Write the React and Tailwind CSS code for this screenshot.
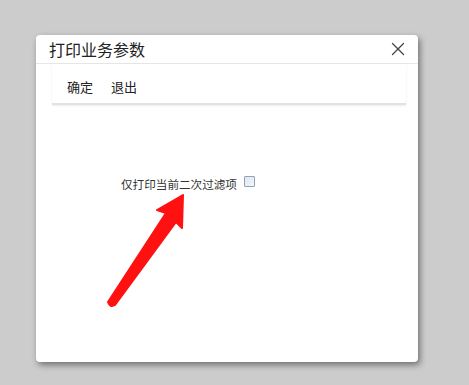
import { X } from 'lucide-react'

export default function App() {
    return (
        <div
            className="relative h-[385px] w-[469px] overflow-hidden bg-[#cccccc] pl-[36px] pt-[35px]"
            style={{ fontFamily: '"Liberation Sans", "Noto Sans CJK SC", sans-serif' }}
        >
            {/* dialog */}
            <div className="flex h-[327px] w-[382px] flex-col rounded-[4px] bg-white shadow-[2px_3px_6px_rgba(0,0,0,0.45)]">
                <div className="flex h-[29px] items-center justify-between border-b border-[#e6e6e6] pl-[13px] pr-[9px] pt-[4px]">
                    <span className="text-[16px] leading-none text-[#222]">打印业务参数</span>
                    <X className="mt-[-4px] h-[22px] w-[22px] text-[#444]" strokeWidth={1.4} />
                </div>

                {/* toolbar */}
                <div className="ml-[16px] mr-[12px] flex h-[41px] items-end gap-[18px] border-b-2 border-[#e2e2e2] pb-[6px] pl-[15px] shadow-[0_1px_2px_rgba(0,0,0,0.08)]">
                    <span className="text-[13px] leading-[18px] text-[#222]">确定</span>
                    <span className="text-[13px] leading-[18px] text-[#222]">退出</span>
                </div>

                {/* body */}
                <div className="flex items-start pl-[85px] pt-[72px]">
                    <span className="text-[11.6px] leading-[16px] text-[#333]">仅打印当前二次过滤项</span>
                    <span className="ml-[7px] mt-[-1px] block h-[11px] w-[11px] rounded-[1px] border border-[#8fa3bd] bg-gradient-to-br from-[#dfe6ee] to-[#f4f6f9]" />
                </div>
            </div>

            {/* red arrow annotation */}
            <svg className="absolute left-0 top-0" width="469" height="385" viewBox="0 0 469 385">
                <path
                    d="M183 195 L157 210 L166 213 L108 302 Q110 308 115 305 L176 222 L182 228 Z"
                    fill="#ff1111"
                    stroke="#ff1111"
                    strokeWidth="2"
                    strokeLinejoin="round"
                />
            </svg>
        </div>
    )
}
